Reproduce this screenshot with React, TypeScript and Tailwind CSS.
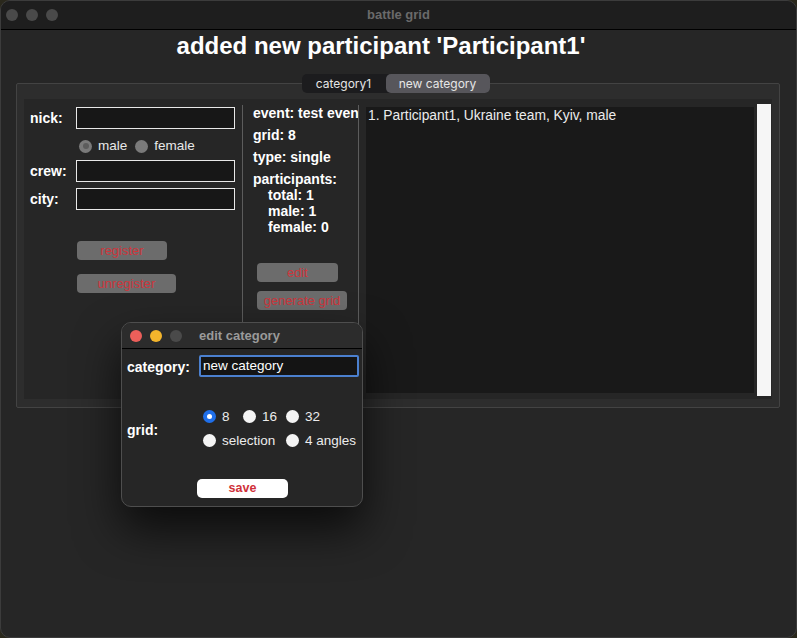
import type { ReactNode } from "react";

const sans = { fontFamily: '"Liberation Sans", Arial, sans-serif' };

/* Red-text gray push button, as in the disabled-looking macOS style */
function GrayButton({ children, className = "" }: { children: ReactNode; className?: string }) {
  return (
    <div
      className={[
        "h-[19px] rounded-[4px] bg-[#6c6c6c] text-[#cc363c] text-[13px] leading-[19px] text-center",
        className,
      ].join(" ")}
    >
      {children}
    </div>
  );
}

function Field({ className = "" }: { className?: string }) {
  return <div className={["h-[22px] w-[159px] bg-[#171717] border border-[#e8e8e8]", className].join(" ")} />;
}

function Radio({ checked = false, dim = false }: { checked?: boolean; dim?: boolean }) {
  if (dim) {
    return (
      <span className="w-[13px] h-[13px] rounded-full bg-[#7a7a7a] flex items-center justify-center">
        {checked && <span className="w-[6px] h-[6px] rounded-full bg-[#5c5c5c]" />}
      </span>
    );
  }
  if (checked) {
    return (
      <span className="w-[13px] h-[13px] rounded-full bg-[#1f6fea] flex items-center justify-center">
        <span className="w-[5px] h-[5px] rounded-full bg-white" />
      </span>
    );
  }
  return <span className="w-[13px] h-[13px] rounded-full bg-[#f4f4f4]" />;
}

function Lights({ colors }: { colors: string[] }) {
  return (
    <div className="flex gap-[8px]">
      {colors.map((c, i) => (
        <span key={i} className={["w-[12px] h-[12px] rounded-full", c].join(" ")} />
      ))}
    </div>
  );
}

export default function App() {
  return (
    <div className="w-[797px] h-[638px] bg-[#2a281c]" style={sans}>
      <div className="relative w-[797px] h-[638px] rounded-[10px] overflow-hidden bg-[#262626] border border-[#3c3c3c] flex flex-col">
        {/* title bar */}
        <div className="h-[29px] shrink-0 bg-[#1e1e1e] border-b border-black flex items-center pl-[5px] relative">
          <Lights colors={["bg-[#4a4a4a]", "bg-[#4a4a4a]", "bg-[#4a4a4a]"]} />
          <div className="absolute inset-0 flex items-center justify-center text-[13px] font-bold text-[#6a6a6a]">
            battle grid
          </div>
        </div>

        {/* heading */}
        <div className="w-[760px] text-center text-[24px] font-bold text-white leading-[28px] mt-[2px]">
          added new participant 'Participant1'
        </div>

        {/* tabs */}
        <div className="flex justify-center mt-[14px] relative z-10 pr-[6px]">
          <div className="flex rounded-[5px] bg-[#1c1c1e] h-[19px] text-[12px] text-[#e6e6e6]" style={{ fontFamily: "Inter, sans-serif" }}>
            <div className="w-[84px] flex items-center justify-center">category1</div>
            <div className="w-[104px] flex items-center justify-center rounded-[5px] bg-[#57565b]">new category</div>
          </div>
        </div>

        {/* group box */}
        <div className="ml-[15px] w-[764px] h-[325px] -mt-[10px] border border-[#434343] bg-[#2d2d2d] rounded-[2px] pt-[15px] pb-[8px] px-[7px]">
          <div className="h-full bg-[#262626] flex text-white">
            {/* left form */}
            <div className="w-[218px] shrink-0 pl-[6px] pt-[8px] flex flex-col">
              <div className="flex items-center">
                <span className="w-[46px] text-[14px] font-bold">nick:</span>
                <Field />
              </div>
              <div className="flex items-center mt-[10px] pl-[49px] text-[13.5px] text-[#e8e8e8] h-[14px]">
                <Radio dim checked />
                <span className="ml-[6px]">male</span>
                <span className="ml-[8px]"><Radio dim /></span>
                <span className="ml-[6px]">female</span>
              </div>
              <div className="flex items-center mt-[7px]">
                <span className="w-[46px] text-[14px] font-bold">crew:</span>
                <Field />
              </div>
              <div className="flex items-center mt-[6px]">
                <span className="w-[46px] text-[14px] font-bold">city:</span>
                <Field />
              </div>
              <GrayButton className="mt-[31px] ml-[47px] w-[90px]">register</GrayButton>
              <GrayButton className="mt-[14px] ml-[47px] w-[99px]">unregister</GrayButton>
            </div>

            {/* info column */}
            <div className="w-[117px] shrink-0 mt-[6px] border-x border-[#5c5c5c] pl-[10px] overflow-hidden whitespace-nowrap text-[14px] font-bold">
              <div className="leading-[22px] -mt-[3px]">event: test event</div>
              <div className="leading-[22px]">grid: 8</div>
              <div className="leading-[22px]">type: single</div>
              <div className="leading-[22px]">participants:</div>
              <div className="pl-[15px] leading-[16px] -mt-[3px]">
                <div>total: 1</div>
                <div>male: 1</div>
                <div>female: 0</div>
              </div>
              <GrayButton className="mt-[28px] ml-[4px] w-[81px] font-normal">edit</GrayButton>
              <GrayButton className="mt-[9px] ml-[4px] w-[90px] font-normal">generate grid</GrayButton>
            </div>

            {/* list */}
            <div className="flex-1 flex pl-[7px] pr-[1px] pt-[5px] pb-[3px]">
              <div className="flex-1 my-[3px] bg-[#191919] pl-[2px] text-[13.8px] leading-[18px] text-[#ececec]">
                1. Participant1, Ukraine team, Kyiv, male
              </div>
              <div className="w-[14px] ml-[3px] bg-[#f6f6f6]" />
            </div>
          </div>
        </div>

        {/* edit category dialog */}
        <div className="absolute left-[120px] top-[321px] w-[242px] h-[185px] rounded-[10px] bg-[#262626] border border-[#4e4e4e] shadow-[0_22px_45px_rgba(0,0,0,0.7)] overflow-hidden flex flex-col text-white">
          <div className="h-[26px] shrink-0 bg-[#2c2c2c] border-b border-black flex items-center pl-[8px]">
            <Lights colors={["bg-[#ec5f5a]", "bg-[#f4b52c]", "bg-[#4a4a4a]"]} />
            <span className="ml-[17px] text-[13px] font-bold text-[#9a9a9a]">edit category</span>
          </div>
          <div className="flex items-center mt-[4px] pl-[5px]">
            <span className="w-[72px] text-[14px] font-bold pt-[4px]">category:</span>
            <div className="w-[160px] h-[22px] bg-[#141414] border-2 border-[#4b80cf] rounded-[2px] pl-[2px] text-[13.5px] leading-[18px]">
              new category
            </div>
          </div>
          <div className="flex items-center mt-[31px] pl-[5px]">
            <span className="w-[76px] text-[14px] font-bold pt-[4px]">grid:</span>
            <div className="grid grid-cols-[40px_43px_auto] gap-y-[9px] text-[13.5px] leading-[15px] text-[#ececec]">
              <div className="flex items-center gap-[6px]"><Radio checked />8</div>
              <div className="flex items-center gap-[6px]"><Radio />16</div>
              <div className="flex items-center gap-[6px]"><Radio />32</div>
              <div className="col-span-2 flex items-center gap-[6px]"><Radio />selection</div>
              <div className="flex items-center gap-[6px]"><Radio />4 angles</div>
            </div>
          </div>
          <div className="mt-[31px] ml-[75px] w-[91px] h-[19px] rounded-[5px] bg-white text-[#d0313a] text-[12.5px] font-bold leading-[19px] text-center">
            save
          </div>
        </div>
      </div>
    </div>
  );
}
